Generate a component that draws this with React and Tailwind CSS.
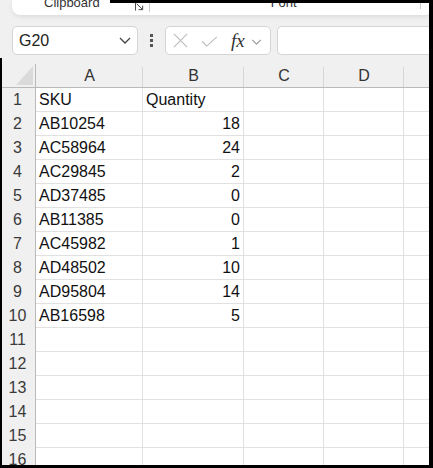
import React from 'react';

const rows = [
    ["SKU", "Quantity"],
    ["AB10254", 18],
    ["AC58964", 24],
    ["AC29845", 2],
    ["AD37485", 0],
    ["AB11385", 0],
    ["AC45982", 1],
    ["AD48502", 10],
    ["AD95804", 14],
    ["AB16598", 5],
    ["", ""],
    ["", ""],
    ["", ""],
    ["", ""],
    ["", ""],
    ["", ""],
];

const Chevron = ({ className }) => (
    <svg viewBox="0 0 12 7" className={className} fill="none" stroke="currentColor" strokeWidth="1.3">
        <path d="M1 1l5 5 5-5" />
    </svg>
);

const App = () => {
    return (
        <div className="relative w-[433px] h-[468px] overflow-hidden bg-[#f0f0f0] font-['Liberation_Sans',Arial,sans-serif] text-[#1b1b1b]">
            {/* ribbon (cut off) */}
            <div className="ml-[12px] h-[15px] bg-white rounded-b-[8px] shadow-[0_2px_4px_rgba(0,0,0,0.08)] overflow-hidden">
                <div className="relative flex items-start h-[15px] text-[13px] text-[#333]">
                    <span className="ml-[32px] -mt-[5px] leading-[16px]">Clipboard</span>
                    <svg viewBox="0 0 10 10" className="ml-[35px] mt-[2px] w-[9px] h-[9px]" fill="none" stroke="#444" strokeWidth="1.1">
                        <path d="M0.5 0.5h9M0.5 0.5v9M2 2l6.5 6.5M4 8.5h4.5V4" />
                    </svg>
                    <div className="ml-[5px] w-px h-[12px] bg-[#c8c8c8]" />
                    <span className="ml-[121px] -mt-[5px] leading-[16px]">Font</span>
                    <div className="ml-[123px] w-px h-[9px] bg-[#c8c8c8]" />
                </div>
            </div>

            {/* formula bar */}
            <div className="mt-[11px] flex items-stretch h-[29px]">
                <div className="ml-[12px] w-[126px] flex items-center bg-white border border-[#d4d4d4] rounded-[5px] pl-[6px] pr-[6px]">
                    <span className="text-[16px] text-[#222]">G20</span>
                    <Chevron className="ml-auto w-[12px] h-[7px] text-[#444]" />
                </div>
                <div className="w-[27px] flex flex-col items-center justify-center gap-[2px]">
                    <span className="w-[3px] h-[3px] bg-[#555]" />
                    <span className="w-[3px] h-[3px] bg-[#555]" />
                    <span className="w-[3px] h-[3px] bg-[#555]" />
                </div>
                <div className="w-[106px] flex items-center bg-white border border-[#d4d4d4] rounded-[5px] pl-[7px]">
                    <svg viewBox="0 0 16 16" className="w-[15px] h-[15px]" fill="none" stroke="#bcbcbc" strokeWidth="1.2">
                        <path d="M1 1l14 14M15 1L1 15" />
                    </svg>
                    <svg viewBox="0 0 18 12" className="ml-[13px] mt-[2px] w-[17px] h-[11px]" fill="none" stroke="#bcbcbc" strokeWidth="1.2">
                        <path d="M1 6l5 5L17 1" />
                    </svg>
                    <span className="ml-[13px] font-['Liberation_Serif',serif] italic text-[19px] leading-none text-[#333]">fx</span>
                    <Chevron className="ml-[6px] mt-[2px] w-[11px] h-[6px] text-[#999]" />
                </div>
                <div className="ml-[6px] flex-1 bg-white border border-[#d4d4d4] rounded-l-[5px] border-r-0" />
            </div>

            {/* grid */}
            <div className="mt-[9px]">
                <div className="flex h-[24px] border-b border-[#b9b9b9] text-[16px] text-[#333]">
                    <div className="w-[36px] border-r border-[#b9b9b9] flex items-end justify-end pr-[2px] pb-[2px]">
                        <svg viewBox="0 0 18 20" className="w-[17px] h-[19px]">
                            <path d="M18 0V20H0Z" fill="#dadada" />
                        </svg>
                    </div>
                    {[["A", "w-[107px]"], ["B", "w-[101px]"], ["C", "w-[80px]"], ["D", "w-[80px]"]].map(([l, w]) => (
                        <div key={l} className={`${w} relative flex items-center justify-center`}>
                            {l}
                            <span className="absolute right-0 bottom-0 w-px h-[20px] bg-[#d6d6d6]" />
                        </div>
                    ))}
                    <div className="flex-1" />
                </div>
                {rows.map((r, i) => (
                    <div key={i} className="flex h-[24px] text-[16px]">
                        <div className="w-[36px] border-r border-[#b9b9b9] flex items-center justify-center text-[#3a3a3a]">
                            {i + 1}
                        </div>
                        <div className="w-[107px] bg-white border-r border-b border-[#e1e1e1] flex items-center pl-[3px] text-[#111]">
                            {r[0]}
                        </div>
                        <div className={`w-[101px] bg-white border-r border-b border-[#e1e1e1] flex items-center px-[3px] text-[#111] ${typeof r[1] === "number" ? "justify-end" : ""}`}>
                            {r[1]}
                        </div>
                        <div className="w-[80px] bg-white border-r border-b border-[#e1e1e1]" />
                        <div className="w-[80px] bg-white border-r border-b border-[#e1e1e1]" />
                        <div className="flex-1 bg-white border-b border-[#e1e1e1]" />
                    </div>
                ))}
            </div>

            {/* screenshot frame */}
            <div className="absolute top-0 left-[110px] right-0 h-[3px] bg-black" />
            <div className="absolute top-0 right-0 bottom-0 w-[4px] bg-black" />
            <div className="absolute left-0 right-0 bottom-0 h-[3px] bg-black" />
            <div className="absolute left-0 top-[58px] bottom-0 w-[2px] bg-black" />
        </div>
    );
};

export default App;
